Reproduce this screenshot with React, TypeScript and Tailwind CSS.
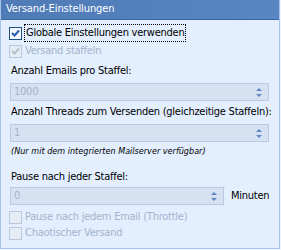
import type { ReactNode } from 'react'

const font = { fontFamily: '"DejaVu Sans Condensed", "DejaVu Sans", Tahoma, sans-serif' }

function CheckBox({ checked, disabled }: { checked?: boolean; disabled?: boolean }) {
  return (
    <div
      className={`flex h-[13px] w-[13px] shrink-0 items-center justify-center border ${
        disabled ? 'border-[#b9c8dc] bg-[#e6ecf3]' : 'border-[#1c5180] bg-[#f4f7fb]'
      }`}
    >
      {checked && (
        <svg width="9" height="9" viewBox="0 0 9 9">
          <path
            d="M1 4 L3.5 6.5 L8 1.5"
            fill="none"
            stroke={disabled ? '#b3bfcf' : '#2a5db0'}
            strokeWidth="2"
          />
        </svg>
      )}
    </div>
  )
}

function Spin({ value, className }: { value: string; className: string }) {
  return (
    <div
      className={`flex h-[18px] items-center border border-[#b7cbe4] bg-[#d6e2f1] pl-[3px] pr-[6px] text-[11px] text-[#a4b4cb] ${className}`}
    >
      <span className="flex-1">{value}</span>
      <div className="flex flex-col gap-[3px]">
        <svg width="6" height="3" viewBox="0 0 6 3">
          <path d="M3 0 L6 3 L0 3 Z" fill="#5f86c5" />
        </svg>
        <svg width="6" height="3" viewBox="0 0 6 3">
          <path d="M0 0 L6 0 L3 3 Z" fill="#5f86c5" />
        </svg>
      </div>
    </div>
  )
}

function Row({ children, className }: { children: ReactNode; className: string }) {
  return <div className={`flex items-center whitespace-nowrap ${className}`}>{children}</div>
}

export default function App() {
  return (
    <div className="h-[250px] w-[281px] bg-[#eef4fc]" style={font}>
      <div className="flex h-[249px] w-[280px] flex-col border-x border-b border-[#a9c4e8] bg-[#e3efff]">
        <div className="flex h-[20px] items-center border-b border-[#3e67a0] bg-gradient-to-r from-[#4f7bb6] to-[#5786c3] pl-[5px] text-[11px] tracking-[-0.1px] text-white">
          Versand-Einstellungen
        </div>
        <div className="flex flex-col px-[8px] text-[11px] tracking-[-0.25px] text-black">
          <Row className="mt-[4px] h-[18px] gap-[2px]">
            <CheckBox checked />
            <span className="border border-dotted border-black px-[1px]">Globale Einstellungen verwenden</span>
          </Row>
          <Row className="h-[19px] gap-[3px] text-[#a4b4cb]">
            <CheckBox checked disabled />
            <span>Versand staffeln</span>
          </Row>
          <Row className="h-[21px] pl-[2px]">Anzahl Emails pro Staffel:</Row>
          <Spin value="1000" className="ml-[1px] mt-[1px] w-[259px]" />
          <Row className="h-[23px] pl-[2px]">Anzahl Threads zum Versenden (gleichzeitige Staffeln):</Row>
          <Spin value="1" className="ml-[1px] w-[259px]" />
          <Row className="h-[20px] pl-[2px] text-[9px] italic tracking-normal">
            (Nur mit dem integrierten Mailserver verfügbar)
          </Row>
          <Row className="mt-[6px] h-[19px] pl-[2px]">Pause nach jeder Staffel:</Row>
          <Row className="h-[18px] gap-[7px]">
            <Spin value="0" className="ml-[1px] w-[214px]" />
            <span>Minuten</span>
          </Row>
          <Row className="mt-[4px] h-[16px] gap-[3px] text-[#a4b4cb]">
            <CheckBox disabled />
            <span>Pause nach jedem Email (Throttle)</span>
          </Row>
          <Row className="h-[16px] gap-[3px] text-[#a4b4cb]">
            <CheckBox disabled />
            <span>Chaotischer Versand</span>
          </Row>
        </div>
      </div>
    </div>
  )
}
